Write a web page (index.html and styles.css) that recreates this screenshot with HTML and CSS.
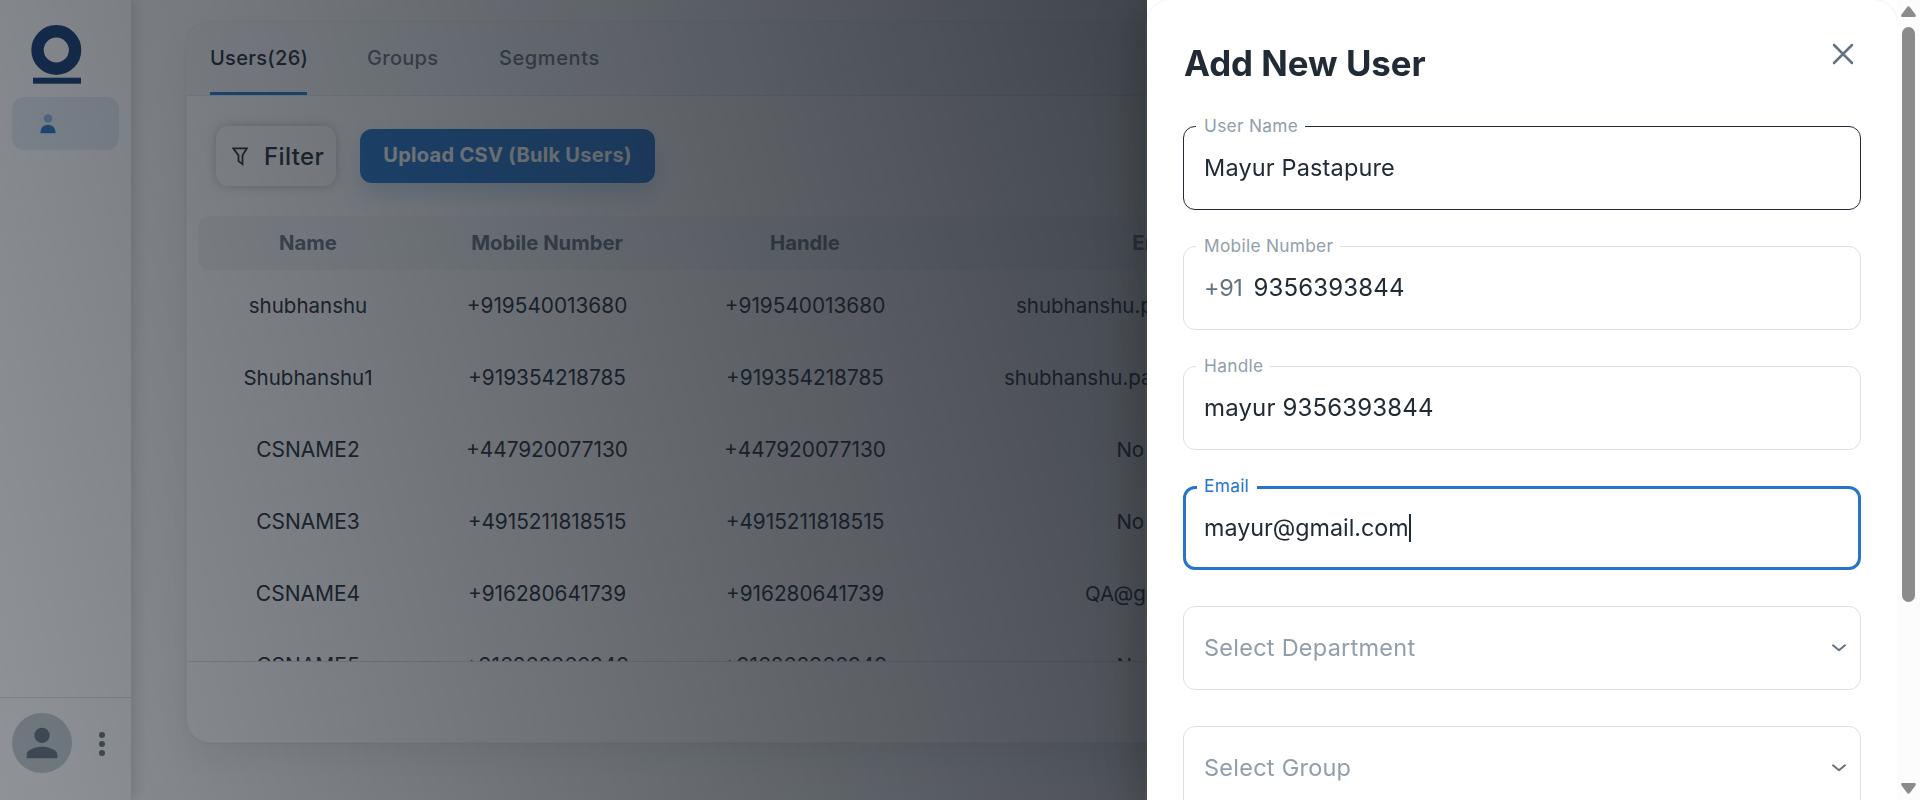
FILE: index.html
```html
<!DOCTYPE html>
<html lang="en">
<head>
<meta charset="utf-8">
<title>Users</title>
<link rel="stylesheet" href="styles.css">
</head>
<body>
<div class="app">
  <aside class="sidebar">
    <svg class="logo" width="52" height="60" viewBox="0 0 52 60"><ellipse cx="25.3" cy="25" rx="18.8" ry="18.7" fill="none" stroke="#103a75" stroke-width="12.4"/><rect x="2" y="52.700" width="48" height="6" fill="#103a75"/></svg>
    <div class="nav-item">
      <svg width="16" height="20" viewBox="0 0 16 20"><circle cx="8" cy="4.5" r="4.3" fill="#8fb5e0"/><path d="M.5 19.3v-1.6a7.5 7 0 0 1 15 0v1.6z" fill="#2675cb"/></svg>
    </div>
    <div class="account">
      <span class="avatar"><svg width="46" height="46" viewBox="0 0 24 24" fill="#637381"><path d="M12 12c2.21 0 4-1.79 4-4s-1.790-4-4-4-4 1.790-4 4 1.790 4 4 4zm0 2c-2.670 0-8 1.340-8 4v2h16v-2c0-2.660-5.330-4-8-4z"/></svg></span>
      <svg width="6" height="24" viewBox="0 0 6 24" fill="#637381"><circle cx="3" cy="3" r="3"/><circle cx="3" cy="12" r="3"/><circle cx="3" cy="21" r="3"/></svg>
    </div>
  </aside>
  <main class="main">
    <section class="card">
      <nav class="tabs">
        <span class="tab active">Users(26)</span>
        <span class="tab groups">Groups</span>
        <span class="tab segments">Segments</span>
      </nav>
      <div class="toolbar">
        <button class="filter"><svg width="16" height="19" viewBox="0 0 16 19" fill="none" stroke="#212b36" stroke-width="1.8"><path d="M1.200 1.400h13.600l-4.300 7v8.700l-4-3V8.400z"/></svg><span>Filter</span></button>
        <button class="upload"><span>Upload CSV (Bulk Users)</span></button>
      </div>
      <div class="table">
        <div class="row head"><span>Name</span><span>Mobile Number</span><span>Handle</span><span>Email</span></div>
        <div class="row"><span>shubhanshu</span><span class="num">+919540013680</span><span class="num">+919540013680</span><span class="mail first">shubhanshu.p</span></div>
        <div class="row"><span>Shubhanshu1</span><span class="num">+919354218785</span><span class="num">+919354218785</span><span class="mail second">shubhanshu.pa</span></div>
        <div class="row"><span class="caps">CSNAME2</span><span class="num">+447920077130</span><span class="num">+447920077130</span><span>No Email</span></div>
        <div class="row"><span class="caps">CSNAME3</span><span class="num">+4915211818515</span><span class="num">+4915211818515</span><span>No Email</span></div>
        <div class="row"><span class="caps">CSNAME4</span><span class="num">+916280641739</span><span class="num">+916280641739</span><span class="mail qa">QA@ga</span></div>
        <div class="row"><span class="caps">CSNAME5</span><span class="num">+916268966949</span><span class="num">+916268966949</span><span>No Email</span></div>
      </div>
      <div class="card-foot"></div>
    </section>
  </main>
</div>
<div class="backdrop"></div>
<div class="drawer">
  <div class="panel">
    <div class="panel-head">
      <h2>Add New User</h2>
      <svg class="close" width="22" height="22" viewBox="0 0 22 22" fill="none" stroke="#637381" stroke-width="2.500" stroke-linecap="round"><path d="M2 2l18 18M20 2L2 20"/></svg>
    </div>
    <div class="fields">
      <div class="field hovered"><label>User Name</label><span>Mayur Pastapure</span></div>
      <div class="field"><label>Mobile Number</label><span class="prefix">+91</span><span class="digits">9356393844</span></div>
      <div class="field"><label>Handle</label><span class="digits">mayur 9356393844</span></div>
      <div class="field focused"><label>Email</label><span class="address">mayur@gmail.com</span><i class="caret"></i></div>
      <div class="field select"><span>Select Department</span><svg width="14" height="8" viewBox="0 0 14 8" fill="none" stroke="#637381" stroke-width="2" stroke-linecap="round" stroke-linejoin="round"><path d="M1 1.300l6 5 6-5"/></svg></div>
      <div class="field select"><span>Select Group</span><svg width="14" height="8" viewBox="0 0 14 8" fill="none" stroke="#637381" stroke-width="2" stroke-linecap="round" stroke-linejoin="round"><path d="M1 1.300l6 5 6-5"/></svg></div>
    </div>
  </div>
  <div class="scrollbar">
    <svg width="15" height="11" viewBox="0 0 15 11" fill="#8b8b8b"><path d="M6 1.200Q7.500-.8 9 1.200L14.500 8.500Q15.500 11 13.500 11H1.500Q-.5 11 .5 8.500z"/></svg>
    <div class="thumb"></div>
    <svg class="down" width="15" height="11" viewBox="0 0 15 11" fill="#8b8b8b"><path d="M6 9.800Q7.500 11.800 9 9.800L14.500 2.500Q15.500 0 13.500 0H1.500Q-.5 0 .5 2.500z"/></svg>
  </div>
</div>
</body>
</html>
```
FILE: styles.css
```css
* { box-sizing: border-box; }
body { margin: 0; height: 800px; overflow: hidden; font-family: Inter, "Liberation Sans", sans-serif; color: #212b36; background: #f9fafb; }
svg { display: block; flex: none; }
.app { display: flex; width: 1920px; height: 800px; }

.sidebar { position: relative; z-index: 1; width: 132px; flex: none; display: flex; flex-direction: column; background: #fff; border-right: 1px solid #dfe3e8; box-shadow: 2px 0 15px rgba(0, 0, 0, .16); }
.logo { margin: 25px 0 0 31px; }
.nav-item { width: 107px; height: 53px; margin: 12px 0 0 12px; padding: 17px 0 0 28px; border-radius: 12px; background: #e4eef8; }
.account { display: flex; align-items: flex-start; gap: 27px; height: 103px; margin-top: auto; padding: 15px 0 0 12px; border-top: 1px solid #dbe0e4; }
.avatar { display: flex; width: 60px; height: 60px; align-items: center; justify-content: center; border-radius: 50%; background: #c4cdd5; }
.account > svg { margin-top: 19px; }

.main { flex: 1; padding: 22px 24px 57px 54px; min-width: 0; }
.card { height: 721px; display: flex; flex-direction: column; overflow: hidden; border-radius: 24px; background: #fff; border: 1px solid #f1f3f5; box-shadow: 0 18px 36px -6px rgba(145, 158, 171, .2), 0 0 3px rgba(145, 158, 171, .2); }
.tabs { display: flex; height: 73px; flex: none; padding-left: 23px; background: #f4f6f8; border-bottom: 1px solid #e5e8eb; font-size: 20px; font-weight: 500; letter-spacing: .3px; line-height: 24px; color: #637381; }
.tab { padding-top: 23px; height: 72px; white-space: nowrap; }
.tab.active { width: 97px; color: #212b36; border-bottom: 3px solid #2675cb; }
.groups { margin-left: 60px; width: 72px; }
.segments { margin-left: 60px; letter-spacing: .6px; }
.toolbar { display: flex; flex: none; align-items: center; gap: 24px; height: 60px; margin: 30px 0 30px 29px; }
button { font-family: inherit; border: 0; display: flex; align-items: center; white-space: nowrap; }
.filter { width: 120px; height: 60px; padding: 0 0 0 16px; gap: 16px; border-radius: 12px; background: #fff; color: #212b36; font-size: 24px; letter-spacing: .4px; font-weight: 500; box-shadow: 0 0 12px rgba(0, 0, 0, .24); }
.upload { width: 295px; height: 54px; padding: 0 0 2px; justify-content: center; border-radius: 12px; background: #2675cb; color: #fff; font-size: 20px; letter-spacing: .3px; font-weight: 700; box-shadow: 0 12px 24px rgba(38, 117, 203, .24); }

.table { flex: 1; overflow: hidden; margin-left: 11px; }
.row { display: grid; grid-template-columns: 220px 258px 258px 450px; width: 1660px; height: 72px; padding-bottom: 1px; align-items: center; text-align: center; font-size: 20.500px; }
.num { font-size: 20.800px; }
.caps { font-size: 21px; }
.head { height: 54px; border-radius: 12px; background: #f4f6f8; color: #637381; font-weight: 700; font-size: 20.300px; }
.mail { text-align: left; }
.mail.first { padding-left: 82px; }
.mail.second { padding-left: 70px; }
.mail.qa { padding-left: 151px; }
.card-foot { height: 81px; flex: none; border-top: 1px solid #dbe0e4; }

.backdrop { position: fixed; inset: 0; z-index: 2; background: linear-gradient(75deg, rgba(22, 28, 36, .48) 0%, rgb(22, 28, 36) 100%); }

.drawer { position: fixed; top: 0; right: 0; z-index: 3; display: flex; width: 773px; height: 800px; background: #fff; box-shadow: -12px 8px 40px rgba(0, 0, 0, .2); }
.panel { width: 750px; height: 800px; overflow: hidden; padding: 0 36px; border-radius: 24px 24px 0 0; background: #fff; box-shadow: 0 0 3px rgba(145, 158, 171, .25); }
.panel-head { display: flex; justify-content: space-between; height: 126px; padding-top: 43px; }
h2 { margin: 0 0 0 1px; font-size: 34.800px; line-height: 40px; font-weight: 700; white-space: nowrap; }
.close { margin-right: 7px; }
.fields { display: flex; flex-direction: column; gap: 36px; }
.field { position: relative; display: flex; flex: none; align-items: center; width: 678px; height: 84px; padding: 0 0 1px 20px; border: 1px solid #dce0e4; border-radius: 12px; font-size: 23.500px; letter-spacing: .15px; white-space: nowrap; }
.field label { position: absolute; top: -13px; left: 12px; height: 24px; padding: 0 7px 0 8px; background: #fff; color: #919eab; font-size: 17.300px; letter-spacing: .3px; line-height: 24px; }
.hovered { border-color: #212b36; }
.focused { border: 3px solid #2675cb; padding-left: 18px; }
.focused label { top: -15px; left: 11px; padding: 0 8px 0 7px; color: #2675cb; }
.prefix { color: #637381; margin-right: 11px; letter-spacing: -.4px; }
.digits { font-size: 24px; }
.address { font-size: 23.300px; letter-spacing: 0; }
.caret { width: 2px; height: 28px; background: #212b36; }
.select { color: #919eab; justify-content: space-between; padding-right: 14px; letter-spacing: .25px; }

.scrollbar { display: flex; flex-direction: column; align-items: center; width: 23px; height: 800px; padding: 6px 0; background: #fcfcfc; }
.thumb { width: 13px; height: 575px; margin-top: 10px; border-radius: 7px; background: #8b8b8b; }
.down { margin-top: auto; }
```
